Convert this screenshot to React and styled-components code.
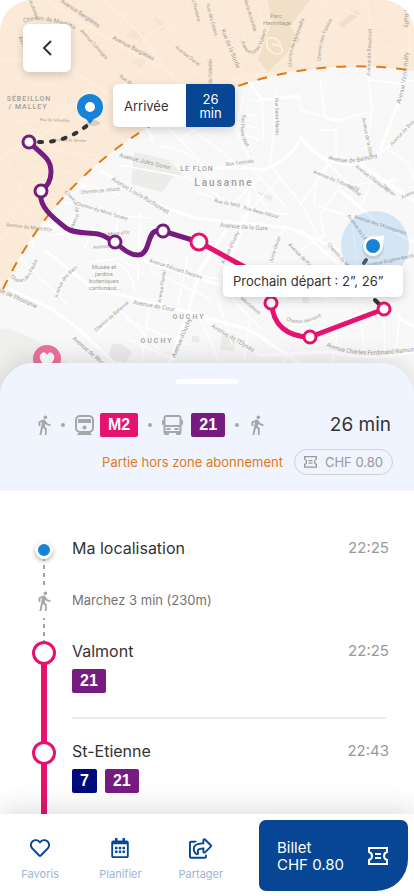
import React from 'react';
import styled, { createGlobalStyle } from 'styled-components';
import { FaRegHeart, FaRegCalendarAlt, FaRegShareSquare } from 'react-icons/fa';
import { MdDirectionsWalk } from 'react-icons/md';

const BLUE = '#074694'
const SKY = '#1683d8'
const PINK = '#e5126f'
const PURPLE = '#761b7f'
const NAVY = '#000a7d'
const ORANGE = '#e27a16'
const TEXT = '#333333'
const MUTED = '#999999'

const LINES = { M2: PINK, 21: PURPLE, 7: NAVY }

const GlobalStyle = createGlobalStyle`
  * { box-sizing: border-box; }
  body {
    margin: 0;
    background: #fff;
    color: ${TEXT};
    font-family: Inter, sans-serif;
  }
  button {
    border: 0;
    padding: 0;
    background: none;
    font-family: inherit;
    cursor: pointer;
  }
  svg { flex: none; }
`

const Screen = styled.div`
  height: 100vh;
  display: flex;
  flex-direction: column;
  overflow: hidden;
`

const MapArea = styled.section`
  position: relative;
  flex: none;
  height: 404px;
  border-radius: 32px 32px 0 0;
  overflow: hidden;
`

const MapDrawing = styled.svg`
  display: block;
  width: 100%;
  height: 100%;
  font-family: Roboto, sans-serif;
`

const BackButton = styled.button`
  position: absolute;
  top: 24px;
  left: 23px;
  width: 48px;
  height: 48px;
  display: flex;
  align-items: center;
  justify-content: center;
  border-radius: 6px;
  background: #fff;
  box-shadow: 0 3px 8px rgba(0, 0, 0, 0.16);
`

const Bubble = styled.div`
  position: absolute;
  display: flex;
  border-radius: 5px;
  background: #fff;
  box-shadow: 0 3px 10px rgba(0, 0, 0, 0.16);
  overflow: hidden;
`

const ArrivalBubble = styled(Bubble)`
  top: 84px;
  left: 113px;
  height: 43px;
  align-items: stretch;
  font-size: 13px;
`

const ArrivalLabel = styled.div`
  display: flex;
  align-items: center;
  width: 73px;
  padding-left: 11px;
`

const ArrivalTime = styled.div`
  display: flex;
  align-items: center;
  width: 49px;
  padding: 0 12px;
  background: ${BLUE};
  color: #fff;
  line-height: 14px;
  text-align: center;
`

const DepartureBubble = styled(Bubble)`
  top: 265px;
  left: 223px;
  width: 180px;
  height: 32px;
  align-items: center;
  padding: 0 10px;
  font-size: 13px;
  white-space: nowrap;
`

const Sheet = styled.main`
  position: relative;
  flex: 1;
  min-height: 0;
  margin-top: -41px;
  display: flex;
  flex-direction: column;
  border-radius: 34px 34px 0 0;
  background: #fff;
  box-shadow: 0 -4px 24px rgba(0, 0, 0, 0.12);
  overflow: hidden;
`

const Summary = styled.header`
  flex: none;
  padding: 16px 21px 16px 36px;
  background: #eff4ff;
`

const Handle = styled.div`
  width: 62px;
  height: 5px;
  margin: 0 auto 29px;
  border-radius: 3px;
  background: #fff;
  translate: -8px 0;
`

const SummaryRow = styled.div`
  display: flex;
  align-items: center;
  justify-content: space-between;
`

const Legs = styled.div`
  display: flex;
  align-items: center;
  color: #a6a7ab;
`

const Dot = styled.span`
  width: 4px;
  height: 4px;
  margin: 0 10px;
  border-radius: 50%;
  background: currentColor;
`

const IconSlot = styled.span`
  display: flex;
  justify-content: center;
  width: ${(props) => props.$width || 15}px;
  margin-right: ${(props) => props.$gap || 0}px;
`

const LineBadge = styled.span`
  display: flex;
  align-items: center;
  height: 24px;
  padding: 0 8px;
  border-radius: 2px;
  background: ${(props) => LINES[props.$line]};
  color: #fff;
  font-family: 'Liberation Sans', sans-serif;
  font-size: 16px;
  font-weight: bold;
`

const Duration = styled.div`
  margin-right: 2px;
  font-size: 19px;
  line-height: 24px;
`

const PriceRow = styled(SummaryRow)`
  justify-content: flex-end;
  gap: 11px;
  margin-top: 12px;
`

const Warning = styled.div`
  color: ${ORANGE};
  font-size: 13px;
`

const PricePill = styled.div`
  display: flex;
  align-items: center;
  gap: 8px;
  height: 26px;
  padding: 0 9px;
  border: 1px solid #cfd0d3;
  border-radius: 13px;
  color: ${MUTED};
  font-size: 13px;
`

const Steps = styled.ol`
  flex: 1;
  min-height: 0;
  margin: 0;
  padding: 47px 25px 0 32px;
  list-style: none;
  overflow: hidden;
`

const Step = styled.li`
  display: flex;
  gap: 16px;
  height: ${(props) => props.$height}px;
`

const Rail = styled.div`
  flex: none;
  display: flex;
  flex-direction: column;
  align-items: center;
  width: 24px;
  padding-top: ${(props) => props.$top || 0}px;
  color: #a9a9a9;
`

const Origin = styled.div`
  width: 18px;
  height: 18px;
  border: 3px solid #fff;
  border-radius: 50%;
  background: ${SKY};
  box-shadow: 0 2px 4px rgba(0, 0, 0, 0.3);
`

const Ring = styled.div`
  flex: none;
  width: 24px;
  height: 24px;
  border: 3px solid ${PINK};
  border-radius: 50%;
`

const Track = styled.div`
  flex: 1;
  width: 6px;
  margin: -2px 0;
  background: ${PINK};
`

const Dashes = styled.div`
  flex: 1;
  width: 2px;
  margin-top: ${(props) => props.$top || 0}px;
  background: repeating-linear-gradient(to bottom, #a3a3a3 0 2px, transparent 2px 6px, #a3a3a3 6px 8px);
`

const StepBody = styled.div`
  flex: 1;
  min-width: 0;
`

const StepTitle = styled.div`
  display: flex;
  justify-content: space-between;
  font-size: 16px;
  line-height: 20px;
`

const Time = styled.time`
  color: ${MUTED};
  font-size: 15px;
`

const Walk = styled.div`
  padding-top: 6px;
  color: #737373;
  font-size: 13px;
  line-height: 18px;
`

const Badges = styled.div`
  display: flex;
  gap: 8px;
  margin-top: 8px;
`

const Divider = styled.hr`
  height: 2px;
  margin: 24px 3px 0 0;
  border: 0;
  background: #ececec;
`

const BottomBar = styled.footer`
  position: relative;
  flex: none;
  display: flex;
  gap: 18px;
  height: 82px;
  padding: 6px 6px 5px 0;
  background: #fff;
  box-shadow: 0 -6px 24px rgba(0, 0, 0, 0.12);
`

const Nav = styled.nav`
  flex: 1;
  display: flex;
`

const NavButton = styled.button`
  flex: 1;
  display: flex;
  flex-direction: column;
  align-items: center;
  gap: 8px;
  padding-top: 18px;
  color: ${BLUE};
  font-size: 11px;
  line-height: 16px;
`

const NavIcon = styled.span`
  display: flex;
  align-items: center;
  height: 20px;
  font-size: ${(props) => props.$size || 20}px;
`

const NavLabel = styled.span`
  color: #9cb5d5;
`

const TicketButton = styled.button`
  display: flex;
  align-items: center;
  justify-content: space-between;
  width: 149px;
  padding: 0 20px 0 18px;
  border-radius: 7px 7px 32px 7px;
  background: ${BLUE};
  color: #fff;
  font-size: 15px;
  line-height: 17px;
  text-align: left;
`

// street names on a straight line: text, x, y, angle, size
const STREETS = [
  ['Avenue Bergières', 60, 2, 34, 6],
  ['Avenue Bergières', 112, 39, 28, 6],
  ['Avenue Colonges', 80, 31, 48, 5],
  ['Avenue Davel', 175, 48, 38, 5],
  ['Rue du Maupas', 119, 77, 35, 5],
  ['Avenue', 18, 37, 66, 6],
  ['Gaudinière', 28, -2, 70, 5],
  ['du Pontano', 191, -3, 75, 5],
  ['Rue de Sébeillon', 40, 121, 2, 4],
  ['Avenue de Sévelin', 54, 141, 2, 4],
  ['Rue de la Borde', 221, 30, 68, 6],
  ['Rue des Celtes', 206, 4, 75, 5],
  ['du Valentin', 212, 84, -90, 5],
  ['de-la-Accordée', 244, 0, 73, 5],
  ['Avenue de Beaumont', 370, 76, -88, 5],
  ['r-Ruffy', 404, 10, 88, 6],
  ['Rue Saint-Martin', 275, 98, 89, 5],
  ['Rue Centrale', 226, 166, -7, 5],
  ['Avenue de la Dôle', 362, 118, 79, 5],
  ['Avenue de Bea', 392, 146, -47, 5],
  ['Avenue du Tribunal-Fé', 313, 173, 22, 5],
  ['Avenue Charles-Se', 355, 167, 38, 5],
  ['Chemin de Villard', 81, 194, -5, 5],
  ['Avenue Jules Gonin', 119, 157, 14, 6],
  ['Avenue Louis-Ruchonnet', 111, 180, 31, 6],
  ['Rue du Midi', 214, 202, 12, 5],
  ['Rue Beau-Séjour', 243, 209, 15, 5],
  ['Avenue de la Gare', 220, 227, 4, 6],
  ['Avenue d\'Ouchy', 224, 264, -64, 5],
  ['Juste-Olivier', 272, 263, -71, 5],
  ['Avenue de Florimont', 288, 245, 46, 5],
  ['Avenue Édouard Dapples', 149, 262, 18, 5],
  ['Chemin du Mont-Tendre', 76, 205, 17, 5],
  ['Avenue du Mont-d\'Or', 6, 226, 7, 5],
  ['Mont-d\'Or', 108, 236, -6, 5],
  ['Avenue', 93, 249, -5, 5],
  ['Rue de Rhodanie', -5, 290, 24, 6],
  ['Chemin de Bellerive', 96, 332, -41, 5],
  ['Avenue de Cour', 133, 304, 10, 6],
  ['Avenue-Floréal', 161, 303, -81, 5],
  ['Avenue d\'Ouchy', 175, 358, -67, 6],
  ['Avenue de Rhodanie', 72, 339, 41, 6],
  ['Avenue des Mousquines', 354, 218, 18, 5],
  ['Avenue du Lé', 347, 216, 54, 5],
  ['Chemin de Malley', 327, 245, 48, 5],
  ['Avenue Eugène-Rambert', 367, 267, -12, 5],
  ['Montchoisi', 240, 299, 40, 5],
  ['Avenue de l\'Elysée', 211, 327, 31, 6],
  ['Toman', 382, 186, 42, 5],
  ['Avenu', 402, 199, -25, 5],
  ['Littoral', 347, 187, 36, 5],
]

// street names that bend: text, path, size
const CURVED_STREETS = [
  ['Chemin de Montétan', 'M24 23 Q42 15 76 30', 6],
  ['Avenue Louis-Vulliemin', 'M241 41 C246 62 262 56 266 30', 5],
  ['Chemin de Montmeillan', 'M292 67 C290 50 296 44 304 20', 5],
  ['Chemin des Falaises', 'M321 61 Q319 44 332 20', 5],
  ['Avenue Victor-Ruffy', 'M400 104 Q408 80 409 46', 6],
  ['Rue Pierre-Viret', 'M243 114 C239 130 240 142 250 150', 5],
  ['Avenue de Béthusy', 'M328 159 Q352 167 380 156', 6],
  ['Chemin de Provence', 'M64 193 C78 202 78 214 70 228', 5],
  ['Chemin des Pêcheurs', 'M10 277 C20 286 27 286 38 260', 5],
  ['Avenue des Bains', 'M58 298 Q60 280 78 268', 5],
  ['Chemin Vermont', 'M286 320 Q303 328 322 316', 5],
  ['Avenue Charles Ferdinand Ramuz', 'M326 346 Q356 360 414 351', 6],
]

const PLACES = [
  ['Parc', 276, 18, 6],
  ['Hermitage', 277, 25, 6],
  ['Musée et', 104, 269, 6],
  ['jardins', 104, 276, 6],
  ['botaniques', 104, 283, 6],
  ['cantonaux...', 105, 290, 6],
]

const DISTRICTS = [
  ['SÉBEILLON', 29, 101, 7, 1],
  ['/ MALLEY', 28, 109, 7, 1],
  ['LE FLON', 197, 171, 7, 1],
  ['Lausanne', 224, 186, 10, 2],
  ['OUCHY', 189, 319, 7, 2],
  ['OUCHY', 157, 343, 7, 2],
]

const MAIN_ROADS = [
  'M45 0 L100 34 L170 72 L230 118',
  'M-5 60 Q60 54 110 96 T150 140',
  'M100 -5 L140 34 L182 90 L215 112',
  'M218 20 L238 66 L262 100 L300 96',
  'M205 85 L240 78 L300 70',
  'M410 -5 L410 50 L398 104 L380 150',
  'M300 136 Q316 162 350 165 Q378 164 414 120',
  'M186 170 Q240 165 262 170 Q290 160 300 140',
  'M354 160 L420 205',
  'M100 170 L150 202 L195 218 L290 228 L340 250',
  'M-5 282 L50 308 L80 330 L130 378',
  'M40 224 L100 238 L148 262 L220 285',
  'M45 250 L92 288 L180 310 L250 330 L310 370',
  'M226 270 L247 215 L250 190',
  'M165 375 L186 318 L200 270 L226 230',
  'M300 230 L345 270 L384 310 L420 330',
  'M205 320 L260 355 L330 352 Q370 362 414 352',
  'M340 190 L380 225 L420 245',
  'M90 90 L50 130 L-5 160',
]

const SIDE_ROADS = [
  'M0 20 L50 60 L80 140', 'M28 -5 L40 40 L12 90', 'M60 80 L110 40 L135 0', 'M90 120 L150 60 L190 0',
  'M150 20 L175 0', 'M120 50 L165 25 L190 35', 'M160 120 L190 80 L214 40', 'M20 70 L60 110 L110 130',
  'M0 110 L60 150 L90 160', 'M0 190 L40 178 L85 188', 'M0 210 Q30 220 34 250', 'M8 160 L20 190 L10 230 L0 240',
  'M10 120 L55 122 L80 135', 'M30 150 L95 155', 'M20 165 L80 174', 'M0 262 Q20 240 34 243', 'M12 200 Q24 202 30 218',
  'M232 0 L246 30 L240 50 Q250 60 264 30 L258 0', 'M290 70 Q284 40 312 20 L330 -5', 'M318 64 Q314 40 345 10 L380 -5',
  'M345 10 L400 34', 'M330 24 L372 44 L410 50', 'M368 0 L372 66', 'M350 36 L350 68', 'M300 34 L325 50',
  'M368 70 L372 110 L366 150', 'M320 78 L325 118 L334 121 L370 112', 'M300 96 L300 110 L345 122', 'M370 80 L400 84 L414 80',
  'M320 130 L336 130 L336 160', 'M276 90 L274 130 L270 165', 'M243 96 L236 130 L250 160', 'M250 100 L262 102 L264 140',
  'M246 115 L258 116', 'M245 125 L258 128', 'M246 135 L260 140', 'M190 128 L220 150 L240 168', 'M170 130 L200 160',
  'M180 140 Q200 120 230 130', 'M160 146 Q190 150 210 172', 'M120 165 L190 178 L225 200', 'M192 190 L235 206 L290 215',
  'M245 175 L268 210', 'M255 172 L285 206', 'M270 165 L300 202 L320 240', 'M228 208 L262 176', 'M240 220 L280 178',
  'M300 136 L350 185 L400 180', 'M318 165 L314 205 L345 215', 'M330 162 L300 205', 'M345 180 L320 215', 'M375 172 L362 205',
  'M390 150 L410 165 L414 180', 'M382 188 L396 176', 'M60 190 Q90 180 120 195', 'M55 200 L110 215 L150 218',
  'M68 228 L82 202', 'M50 235 L95 232', 'M96 222 L84 250', 'M120 205 L115 240', 'M140 212 L138 280', 'M90 262 L120 258 L145 275',
  'M115 262 Q130 268 135 292', 'M56 300 L62 275 L78 262', 'M38 262 L20 284', 'M20 258 L68 305', 'M98 334 L124 304',
  'M120 310 L160 350', 'M150 300 L140 375', 'M125 320 L190 345', 'M130 340 L175 360', 'M160 308 L168 260', 'M178 305 L188 255',
  'M170 270 L222 280', 'M150 270 L212 300', 'M200 318 L225 375', 'M218 300 L232 345', 'M232 298 L262 330', 'M250 320 L244 360',
  'M270 268 L285 225', 'M282 300 L305 285 L330 300', 'M285 322 Q303 330 322 316', 'M325 345 L355 315 L405 300', 'M365 350 L360 320',
  'M385 352 L384 315', 'M400 312 L396 352', 'M300 250 L325 235 L320 215', 'M352 215 L360 300', 'M340 320 L330 375', 'M290 345 L280 375',
]

const STOPS = [
  [29, 142, 6, PURPLE], [41, 191, 6, PURPLE], [115, 242, 6, PURPLE], [163, 231, 6, PURPLE],
  [199, 242, 8, PINK], [271, 303, 6, PINK], [310, 337, 6, PINK], [384, 309, 6, PINK],
]

const ZONE_EDGE = 'M3 289 C50 190 130 120 247 83 C300 66 360 62 414 71'

const CityMap = () => (
  <MapDrawing viewBox='0 0 414 404' preserveAspectRatio='xMidYMin slice' aria-label='Lausanne'>
    <rect width='414' height='404' fill='#f8f8f8' />
    <path d='M0 328 Q20 330 42 344 L96 384 L110 404 L0 404z' fill='#efefee' />
    <g fill='#ececea'>
      <path d='M268 0 L310 0 L290 26 L300 40 L268 72 L258 60 L272 22z' fill='#e2e4d8' />
      <path d='M339 24 L357 10 L360 14 L343 28z' fill='#e2e4d8' />
      <path d='M134 152 L168 160 L186 178 L174 176 L162 192 L131 184z' />
      <path d='M252 190 L273 196 L271 202z' />
      <path d='M126 36 L134 29 L145 34 L141 42z M130 62 L148 55 L142 70z M152 14 L166 26 L162 32z' />
      <path d='M108 360 L112 344 L122 344 L132 352 L126 362z' />
      <path d='M192 336 h7 v6 h-7z M222 335 l14 3 l-3 14 l-13 -3z M302 296 h7 v7 h-7z' />
    </g>
    <g fill='none' stroke='#fff' strokeLinejoin='round'>
      {SIDE_ROADS.map((d) => <path key={d} d={d} strokeWidth='1.5' />)}
      {MAIN_ROADS.map((d) => <path key={d} d={d} strokeWidth='3' />)}
      <path d='M268 38 q10 -2 13 8 q4 8 -5 8 q-12 -4 -8 -16z M272 44 l8 2' strokeWidth='2' />
    </g>
    <path d='M0 0 H414 V71 C360 62 300 66 247 83 C130 120 50 190 3 289 L0 295z' fill='#fbdcb5' fillOpacity='0.5' />
    <g fill='#a39e97'>
      {STREETS.map(([name, x, y, angle, size]) => (
        <text key={name + x} fontSize={size} transform={`translate(${x} ${y}) rotate(${angle})`}>{name}</text>
      ))}
      {CURVED_STREETS.map(([name, d, size], i) => (
        <g key={name}>
          <path id={`street-${i}`} d={d} fill='none' />
          <text fontSize={size}><textPath href={`#street-${i}`}>{name}</textPath></text>
        </g>
      ))}
      {PLACES.map(([name, x, y, size]) => (
        <text key={name} x={x} y={y} fontSize={size} textAnchor='middle'>{name}</text>
      ))}
      {DISTRICTS.map(([name, x, y, size, tracking]) => (
        <text key={name + x} x={x} y={y} fontSize={size} fontWeight='500' letterSpacing={tracking} textAnchor='middle'>{name}</text>
      ))}
    </g>
    <path d={ZONE_EDGE} fill='none' stroke={ORANGE} strokeWidth='2' strokeDasharray='10 10' />

    <circle cx='375' cy='245' r='34' fill={SKY} fillOpacity='0.16' />
    <g fill='none' stroke={TEXT} strokeWidth='4' strokeLinecap='round'>
      <path d='M39 142 Q66 143 89 124' strokeDasharray='3 9' />
      <path d='M366 260 l-2 3' stroke='#4b5d6c' />
      <path d='M375 300 l4 4' />
    </g>
    <g fill='none' strokeWidth='5'>
      <path
        d='M29 142 C42 155 51 158 51 172 Q51 184 41 191 C38 206 52 217 66 228 C74 234 88 232 98 234 C108 236 108 240 115 242 C124 250 130 255 138 255 C150 255 147 233 156 231 L163 231 L199 242'
        stroke={PURPLE}
      />
      <path d='M199 242 L250 270 C268 280 272 290 272 303 C272 325 288 337 310 337 L384 309' stroke={PINK} />
    </g>
    {STOPS.map(([x, y, r, color]) => (
      <circle key={x} cx={x} cy={y} r={r} fill='#fff' stroke={color} strokeWidth='3' />
    ))}

    <ellipse cx='93' cy='123' rx='7' ry='3' fill='#000' fillOpacity='0.12' />
    <path d='M90 124 L86 119 C80 117 77 112 77 107 A13 13 0 0 1 103 107 C103 112 100 117 94 119z' fill={SKY} />
    <circle cx='90' cy='107' r='5' fill='#fff' />

    <circle cx='373' cy='248' r='11' fill='#000' fillOpacity='0.1' />
    <path d='M384 235 L383 246 A10 10 0 1 1 373 236 Q380 237 384 235z' fill='#fff' />
    <circle cx='373' cy='246' r='7' fill={SKY} />

    <circle cx='47' cy='359' r='14' fill='#ee719d' />
    <path d='M47 368 L41 361 Q38 356 42 353 Q45 351 47 355 Q49 351 52 353 Q56 356 53 361z' fill='#fff' />
  </MapDrawing>
)

const Chevron = () => (
  <svg width='10' height='16' viewBox='0 0 10 16' fill='none' stroke={TEXT} strokeWidth='2'>
    <path d='M9 1 L2 8 L9 15' />
  </svg>
)

const TrainIcon = () => (
  <svg width='19' height='20' viewBox='0 0 19 20' fill='currentColor'>
    <rect x='1' y='1' width='17' height='16' rx='4' fill='none' stroke='currentColor' strokeWidth='2' />
    <rect x='3' y='4' width='13' height='4' />
    <circle cx='9.5' cy='12.5' r='2' />
    <path d='M4 17 h11 l2 3 h-15z' />
  </svg>
)

const BusIcon = () => (
  <svg width='21' height='20' viewBox='0 0 21 20' fill='currentColor'>
    <path d='M4 0 H17 Q19 0 19.500 2 V18 H1.500 V2 Q2 0 4 0z M3.500 2 V10 H17.500 V2z M3.500 12 V16 H17.500 V12z' fillRule='evenodd' />
    <rect x='0' y='5' width='2' height='5' rx='1' />
    <rect x='19' y='5' width='2' height='5' rx='1' />
    <rect x='4.5' y='13' width='4' height='2' />
    <rect x='12.5' y='13' width='4' height='2' />
    <rect x='2' y='17' width='5' height='3' rx='1' />
    <rect x='14' y='17' width='5' height='3' rx='1' />
  </svg>
)

const TicketIcon = ({ width }) => (
  <svg width={width} height={width * 0.9} viewBox='0 0 20 18' fill='none' stroke='currentColor' strokeWidth='2'>
    <path d='M1 1 H19 V5 Q16 6 16 9 Q16 12 19 13 V17 H1 V13 Q4 12 4 9 Q4 6 1 5z' />
    <path d='M7 7 H13 M7 11 H13' />
  </svg>
)

const Stop = ({ name, time, lines, divided }) => (
  <Step $height={100}>
    <Rail>
      <Ring />
      <Track />
    </Rail>
    <StepBody>
      <StepTitle>{name}<Time>{time}</Time></StepTitle>
      <Badges>
        {lines.map((line) => <LineBadge key={line} $line={line}>{line}</LineBadge>)}
      </Badges>
      {divided && <Divider />}
    </StepBody>
  </Step>
)

const App = () => (
  <Screen>
    <GlobalStyle />
    <MapArea>
      <CityMap />
      <BackButton aria-label='Retour'><Chevron /></BackButton>
      <ArrivalBubble>
        <ArrivalLabel>Arrivée</ArrivalLabel>
        <ArrivalTime>26 min</ArrivalTime>
      </ArrivalBubble>
      <DepartureBubble>Prochain départ : 2”, 26”</DepartureBubble>
    </MapArea>

    <Sheet>
      <Summary>
        <Handle />
        <SummaryRow>
          <Legs>
            <IconSlot><MdDirectionsWalk size={22} /></IconSlot>
            <Dot />
            <IconSlot $width={19} $gap={6}><TrainIcon /></IconSlot>
            <LineBadge $line='M2'>M2</LineBadge>
            <Dot />
            <IconSlot $width={21} $gap={8}><BusIcon /></IconSlot>
            <LineBadge $line='21'>21</LineBadge>
            <Dot />
            <IconSlot><MdDirectionsWalk size={22} /></IconSlot>
          </Legs>
          <Duration>26 min</Duration>
        </SummaryRow>
        <PriceRow>
          <Warning>Partie hors zone abonnement</Warning>
          <PricePill><TicketIcon width={13} />CHF 0.80</PricePill>
        </PriceRow>
      </Summary>

      <Steps>
        <Step $height={47}>
          <Rail $top={3}>
            <Origin />
            <Dashes />
          </Rail>
          <StepBody>
            <StepTitle>Ma localisation<Time>22:25</Time></StepTitle>
          </StepBody>
        </Step>
        <Step $height={56}>
          <Rail $top={5}>
            <MdDirectionsWalk size={22} />
            <Dashes $top={6} />
          </Rail>
          <StepBody>
            <Walk>Marchez 3 min (230m)</Walk>
          </StepBody>
        </Step>
        <Stop name='Valmont' time='22:25' lines={['21']} divided />
        <Stop name='St-Etienne' time='22:43' lines={['7', '21']} />
      </Steps>
    </Sheet>

    <BottomBar>
      <Nav>
        <NavButton>
          <NavIcon><FaRegHeart /></NavIcon>
          <NavLabel>Favoris</NavLabel>
        </NavButton>
        <NavButton>
          <NavIcon><FaRegCalendarAlt /></NavIcon>
          <NavLabel>Planifier</NavLabel>
        </NavButton>
        <NavButton>
          <NavIcon $size={23}><FaRegShareSquare /></NavIcon>
          <NavLabel>Partager</NavLabel>
        </NavButton>
      </Nav>
      <TicketButton>
        <span>Billet<br />CHF 0.80</span>
        <TicketIcon width={20} />
      </TicketButton>
    </BottomBar>
  </Screen>
)

export default App;
